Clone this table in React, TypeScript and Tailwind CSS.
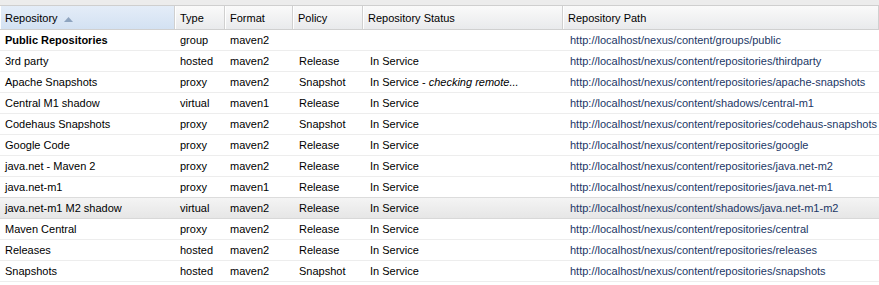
import { ReactNode } from "react";

type Repo = {
  name: string;
  type: string;
  format: string;
  policy: string;
  status: ReactNode;
  path: string;
  bold?: boolean;
};

const base = "http://localhost/nexus/content";

const repos: Repo[] = [
  { name: "Public Repositories", type: "group", format: "maven2", policy: "", status: "", path: `${base}/groups/public`, bold: true },
  { name: "3rd party", type: "hosted", format: "maven2", policy: "Release", status: "In Service", path: `${base}/repositories/thirdparty` },
  {
    name: "Apache Snapshots",
    type: "proxy",
    format: "maven2",
    policy: "Snapshot",
    status: (
      <>
        In Service - <i>checking remote...</i>
      </>
    ),
    path: `${base}/repositories/apache-snapshots`,
  },
  { name: "Central M1 shadow", type: "virtual", format: "maven1", policy: "Release", status: "In Service", path: `${base}/shadows/central-m1` },
  { name: "Codehaus Snapshots", type: "proxy", format: "maven2", policy: "Snapshot", status: "In Service", path: `${base}/repositories/codehaus-snapshots` },
  { name: "Google Code", type: "proxy", format: "maven2", policy: "Release", status: "In Service", path: `${base}/repositories/google` },
  { name: "java.net - Maven 2", type: "proxy", format: "maven2", policy: "Release", status: "In Service", path: `${base}/repositories/java.net-m2` },
  { name: "java.net-m1", type: "proxy", format: "maven1", policy: "Release", status: "In Service", path: `${base}/repositories/java.net-m1` },
  { name: "java.net-m1 M2 shadow", type: "virtual", format: "maven2", policy: "Release", status: "In Service", path: `${base}/shadows/java.net-m1-m2` },
  { name: "Maven Central", type: "proxy", format: "maven2", policy: "Release", status: "In Service", path: `${base}/repositories/central` },
  { name: "Releases", type: "hosted", format: "maven2", policy: "Release", status: "In Service", path: `${base}/repositories/releases` },
  { name: "Snapshots", type: "hosted", format: "maven2", policy: "Snapshot", status: "In Service", path: `${base}/repositories/snapshots` },
];

const cols = "grid grid-cols-[175px_50px_68px_70px_200px_1fr]";

function HeadCell({ children, sorted }: { children: ReactNode; sorted?: boolean }) {
  return (
    <div
      className={`flex items-center gap-[6px] pl-[5px] pt-[2px] border-r border-[#d0d0d0] shadow-[inset_1px_0_0_#fff] whitespace-nowrap overflow-hidden ${
        sorted ? "bg-gradient-to-b from-[#e4edf8] to-[#d3e1f2]" : ""
      }`}
    >
      {children}
      {sorted && (
        <svg width="9" height="5" viewBox="0 0 9 5" className="mt-[1px]">
          <path d="M0 5 L4.5 0 L9 5 Z" fill="#8ea4bf" />
        </svg>
      )}
    </div>
  );
}

export default function App() {
  return (
    <div
      className="w-[879px] h-[285px] bg-white overflow-hidden text-[11px] text-black"
      style={{ fontFamily: "'Liberation Sans', Arial, sans-serif" }}
    >
      <div className="h-[6px] bg-[#ececec] border-b border-[#cfcfcf]" />
      <div className={`${cols} h-[24px] bg-gradient-to-b from-[#fafafa] to-[#e9eaec] border-b border-[#d0d0d0]`}>
        <HeadCell sorted>Repository</HeadCell>
        <HeadCell>Type</HeadCell>
        <HeadCell>Format</HeadCell>
        <HeadCell>Policy</HeadCell>
        <HeadCell>Repository Status</HeadCell>
        <HeadCell>Repository Path</HeadCell>
      </div>
      {repos.map((r) => {
        const hot = r.name === "java.net-m1 M2 shadow";
        return (
          <div
            key={r.name}
            className={`${cols} items-center border-b whitespace-nowrap ${
              hot
                ? "bg-gradient-to-b from-[#f4f4f4] to-[#e6e6e6] border-[#d8d8d8] border-t border-t-[#dcdcdc] -mt-px h-[22px]"
                : "h-[21px] border-[#ededed]"
            }`}
          >
            <div className={`pl-[5px] ${r.bold ? "font-bold" : ""}`}>{r.name}</div>
            <div className="pl-[5px]">{r.type}</div>
            <div className="pl-[5px]">{r.format}</div>
            <div className="pl-[6px]">{r.policy}</div>
            <div className="pl-[7px]">{r.status}</div>
            <div className="pl-[7px] text-[#1c3766] overflow-hidden">{r.path}</div>
          </div>
        );
      })}
    </div>
  );
}
